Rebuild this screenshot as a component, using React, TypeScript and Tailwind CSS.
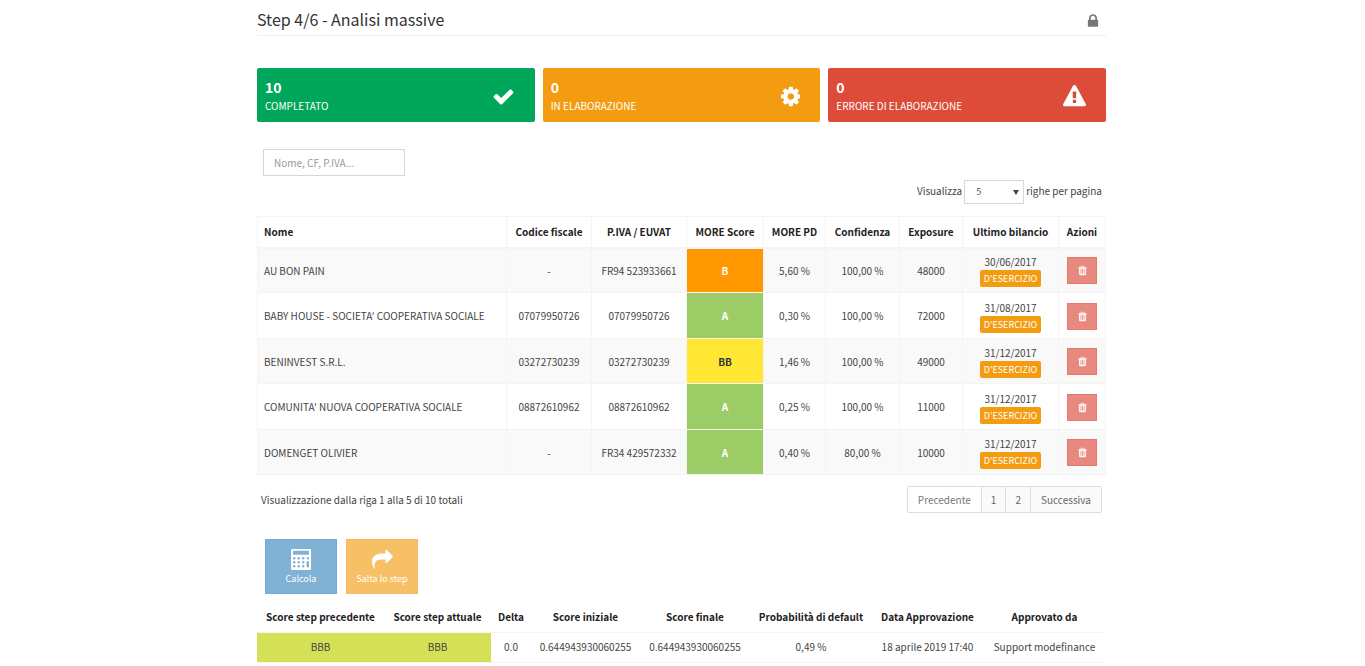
import React, { useState } from "react";

interface IconProps {
  d: string;
  viewBox?: string;
  className?: string;
}

interface Company {
  name: string;
  taxCode: string;
  vat: string;
  score: "A" | "B" | "BB";
  pd: string;
  confidence: string;
  exposure: string;
  lastReport: string;
}

const ICONS = {
  lock: "M640 768h512v-192q0-106-75-181t-181-75-181 75-75 181v192zm832 96v576q0 40-28 68t-68 28h-960q-40 0-68-28t-28-68v-576q0-40 28-68t68-28h32v-192q0-184 132-316t316-132 316 132 132 316v192h32q40 0 68 28t28 68z",
  check: "M1671 566q0 40-28 68l-724 724-136 136q-28 28-68 28t-68-28l-136-136-362-362q-28-28-28-68t28-68l136-136q28-28 68-28t68 28l294 295 656-657q28-28 68-28t68 28l136 136q28 28 28 68z",
  cog: "M1152 896q0-106-75-181t-181-75-181 75-75 181 75 181 181 75 181-75 75-181zm512-109v222q0 12-8 23t-20 13l-185 28q-19 54-39 91 35 50 107 138 10 12 10 25t-9 23q-27 37-99 108t-94 71q-12 0-26-9l-138-108q-44 23-91 38-16 136-29 186-7 28-36 28h-222q-14 0-24.5-8.5t-11.5-21.5l-28-184q-49-16-90-37l-141 107q-10 9-25 9-14 0-25-11-126-114-165-168-7-10-7-23 0-12 8-23 15-21 51-66.5t54-70.5q-27-50-41-99l-183-27q-13-2-21-12.5t-8-23.5v-222q0-12 8-23t19-13l186-28q14-46 39-92-40-57-107-138-10-12-10-24 0-10 9-23 26-36 98.5-107.5t94.5-71.5q13 0 26 10l138 107q44-23 91-38 16-136 29-186 7-28 36-28h222q14 0 24.5 8.5t11.5 21.5l28 184q49 16 90 37l142-107q9-9 24-9 13 0 25 10 129 119 165 170 7 8 7 22 0 12-8 23-15 21-51 66.5t-54 70.5q26 50 41 98l183 28q13 2 21 12.5t8 23.5z",
  warning:
    "M1024 1375v-190q0-14-9.5-23.5t-22.5-9.5h-192q-13 0-22.5 9.5t-9.5 23.5v190q0 14 9.5 23.5t22.5 9.5h192q13 0 22.5-9.5t9.5-23.5zm-2-374l18-459q0-12-10-19-13-11-24-11h-220q-11 0-24 11-10 7-10 21l17 457q0 10 10 16.5t24 6.5h185q14 0 23.5-6.5t10.5-16.5zm-14-934l768 1408q35 63-2 126-17 29-46.5 46t-63.5 17h-1536q-34 0-63.5-17t-46.5-46q-37-63-2-126l768-1408q17-31 47-49t65-18 65 18 47 49z",
  trash:
    "M704 1376v-704q0-14-9-23t-23-9h-64q-14 0-23 9t-9 23v704q0 14 9 23t23 9h64q14 0 23-9t9-23zm256 0v-704q0-14-9-23t-23-9h-64q-14 0-23 9t-9 23v704q0 14 9 23t23 9h64q14 0 23-9t9-23zm256 0v-704q0-14-9-23t-23-9h-64q-14 0-23 9t-9 23v704q0 14 9 23t23 9h64q14 0 23-9t9-23zm-544-992h448l-48-117q-7-9-17-11h-317q-10 2-17 11zm928 32v64q0 14-9 23t-23 9h-96v948q0 83-47 143.5t-113 60.5h-832q-66 0-113-58.5t-47-141.5v-952h-96q-14 0-23-9t-9-23v-64q0-14 9-23t23-9h309l70-167q15-37 54-63t79-26h320q40 0 79 26t54 63l70 167h309q14 0 23 9t9 23z",
  share:
    "M1792 640q0 26-19 45l-512 512q-19 19-45 19t-45-19-19-45v-256h-224q-98 0-175.5 6t-154 21.5-133 42.5-105.5 69.5-80 101-48.5 138.5-17.5 181q0 55 5 123 0 6 2.5 23.5t2.5 26.5q0 15-8.5 25t-23.5 10q-16 0-28-17-7-9-13-22t-13.5-30-10.5-24q-127-285-127-451 0-199 53-333 162-403 875-403h224v-256q0-26 19-45t45-19 45 19l512 512q19 19 19 45z",
};

const COMPANIES: Company[] = [
  { name: "AU BON PAIN", taxCode: "-", vat: "FR94 523933661", score: "B", pd: "5,60 %", confidence: "100,00 %", exposure: "48000", lastReport: "30/06/2017" },
  { name: "BABY HOUSE - SOCIETA' COOPERATIVA SOCIALE", taxCode: "07079950726", vat: "07079950726", score: "A", pd: "0,30 %", confidence: "100,00 %", exposure: "72000", lastReport: "31/08/2017" },
  { name: "BENINVEST S.R.L.", taxCode: "03272730239", vat: "03272730239", score: "BB", pd: "1,46 %", confidence: "100,00 %", exposure: "49000", lastReport: "31/12/2017" },
  { name: "COMUNITA' NUOVA COOPERATIVA SOCIALE", taxCode: "08872610962", vat: "08872610962", score: "A", pd: "0,25 %", confidence: "100,00 %", exposure: "11000", lastReport: "31/12/2017" },
  { name: "DOMENGET OLIVIER", taxCode: "-", vat: "FR34 429572332", score: "A", pd: "0,40 %", confidence: "80,00 %", exposure: "10000", lastReport: "31/12/2017" },
];

const SCORE_COLORS = {
  A: "bg-[#9ccc65] text-white",
  B: "bg-[#ff9800] text-white",
  BB: "bg-[#ffe734] text-[#333]",
};

const STATUSES = [
  { count: 10, label: "COMPLETATO", color: "bg-[#00a65a]", icon: ICONS.check, viewBox: "0 0 1792 1792" },
  { count: 0, label: "IN ELABORAZIONE", color: "bg-[#f39c12]", icon: ICONS.cog, viewBox: "128 0 1536 1792" },
  { count: 0, label: "ERRORE DI ELABORAZIONE", color: "bg-[#dd4b39]", icon: ICONS.warning, viewBox: "0 0 1792 1792" },
];

function Icon({ d, viewBox = "0 0 1792 1792", className = "" }: IconProps) {
  return (
    <svg viewBox={viewBox} fill="currentColor" className={className} aria-hidden="true">
      <path d={d} />
    </svg>
  );
}

function CalculatorIcon({ className = "" }: { className?: string }) {
  return (
    <svg viewBox="0 0 20 21" className={className} aria-hidden="true">
      <path
        fill="currentColor"
        fillRule="evenodd"
        d="M1.2 0h17.6q1.2 0 1.2 1.2v18.6q0 1.2-1.2 1.2H1.2Q0 21 0 19.8V1.2Q0 0 1.2 0zM2 1.8v4h16v-4z"
      />
      <g fill="#7fb2d4">
        {[8, 12, 16].map((y) => (
          <React.Fragment key={y}>
            <rect x="2" y={y} width="2.4" height="2.4" rx="1.2" />
            <rect x="6.5" y={y} width="2.4" height="2.4" rx="1.2" />
            <rect x="11" y={y} width="2.4" height="2.4" rx="1.2" />
          </React.Fragment>
        ))}
        <rect x="15.6" y="8" width="2.4" height="2.4" rx="1.2" />
        <rect x="15.6" y="12" width="2.4" height="6.4" rx="1.2" />
      </g>
    </svg>
  );
}

function StatusCards() {
  return (
    <div className="grid grid-cols-3 gap-2">
      {STATUSES.map((status) => (
        <div
          key={status.label}
          className={`flex items-center justify-between rounded-xs pt-[9px] pr-5 pb-[7px] pl-2 text-white ${status.color}`}
        >
          <div>
            <div className="text-sm leading-5 font-bold">{status.count}</div>
            <div className="leading-[18px]">{status.label}</div>
          </div>
          <Icon d={status.icon} viewBox={status.viewBox} className="h-[23px]" />
        </div>
      ))}
    </div>
  );
}

function CompaniesTable() {
  const head = "border border-[#f4f4f4] border-b-2 text-center font-bold";
  const cell = "border border-[#f4f4f4] pt-px text-center";

  return (
    <table className="w-full table-fixed border-collapse">
      <colgroup>
        <col />
        <col className="w-[85px]" />
        <col className="w-[95px]" />
        <col className="w-[77px]" />
        <col className="w-[62px]" />
        <col className="w-[74px]" />
        <col className="w-[63px]" />
        <col className="w-[96px]" />
        <col className="w-[47px]" />
      </colgroup>
      <thead>
        <tr className="h-[31px] text-[#222]">
          <th className="border border-b-2 border-[#f4f4f4] pl-[6px] text-left font-bold">Nome</th>
          <th className={head}>Codice fiscale</th>
          <th className={head}>P.IVA / EUVAT</th>
          <th className={head}>MORE Score</th>
          <th className={head}>MORE PD</th>
          <th className={head}>Confidenza</th>
          <th className={head}>Exposure</th>
          <th className={head}>Ultimo bilancio</th>
          <th className={head}>Azioni</th>
        </tr>
      </thead>
      <tbody>
        {COMPANIES.map((company) => (
          <tr key={company.name} className="odd:h-[45px] odd:bg-[#f9f9f9] even:h-[46px]">
            <td className="border border-[#f4f4f4] pt-px pl-[6px]">{company.name}</td>
            <td className={cell}>{company.taxCode}</td>
            <td className={cell}>{company.vat}</td>
            <td className={`${cell} font-bold ${SCORE_COLORS[company.score]}`}>{company.score}</td>
            <td className={cell}>{company.pd}</td>
            <td className={cell}>{company.confidence}</td>
            <td className={cell}>{company.exposure}</td>
            <td className={cell}>
              <div className="leading-4">{company.lastReport}</div>
              <span className="inline-block rounded-xs bg-[#f39c12] px-1 align-top text-[9px] leading-[17px] text-white">
                D'ESERCIZIO
              </span>
            </td>
            <td className={cell}>
              <button
                type="button"
                aria-label="Elimina"
                className="inline-flex h-[27px] w-[30px] items-center justify-center border border-[#e37a6d] bg-[#e7897e] align-middle text-white/90"
              >
                <Icon d={ICONS.trash} className="size-[11px]" />
              </button>
            </td>
          </tr>
        ))}
      </tbody>
    </table>
  );
}

function Pagination() {
  const item = "bg-[#fafafa] leading-[25px] text-[#666]";
  return (
    <nav className="flex divide-x divide-[#ddd] overflow-hidden rounded-xs border border-[#ddd]">
      <button type="button" disabled className="bg-white px-[10px] leading-[25px] text-[#777]">
        Precedente
      </button>
      <a href="#1" className={`px-[9px] ${item}`}>
        1
      </a>
      <a href="#2" className={`px-[9px] ${item}`}>
        2
      </a>
      <a href="#2" className={`px-[10px] ${item}`}>
        Successiva
      </a>
    </nav>
  );
}

function ScoreTable() {
  const cell = "border-y border-[#f4f4f4] text-center";
  return (
    <table className="w-full table-fixed border-collapse">
      <colgroup>
        <col className="w-[127px]" />
        <col className="w-[107px]" />
        <col className="w-[40px]" />
        <col className="w-[109px]" />
        <col className="w-[110px]" />
        <col className="w-[122px]" />
        <col className="w-[111px]" />
        <col />
      </colgroup>
      <thead>
        <tr className="h-[30px] text-[#222]">
          <th className="font-bold">Score step precedente</th>
          <th className="font-bold">Score step attuale</th>
          <th className="font-bold">Delta</th>
          <th className="font-bold">Score iniziale</th>
          <th className="font-bold">Score finale</th>
          <th className="font-bold">Probabilità di default</th>
          <th className="font-bold">Data Approvazione</th>
          <th className="font-bold">Approvato da</th>
        </tr>
      </thead>
      <tbody>
        <tr className="h-[30px]">
          <td className={`${cell} bg-[#d4e157]`}>BBB</td>
          <td className={`${cell} bg-[#d4e157]`}>BBB</td>
          <td className={cell}>0.0</td>
          <td className={cell}>0.644943930060255</td>
          <td className={cell}>0.644943930060255</td>
          <td className={cell}>0,49 %</td>
          <td className={cell}>18 aprile 2019 17:40</td>
          <td className={cell}>Support modefinance</td>
        </tr>
      </tbody>
    </table>
  );
}

export default function App() {
  const [query, setQuery] = useState("");
  const [pageSize, setPageSize] = useState("5");

  return (
    <div className="bg-white pr-0.5 font-['Noto_Sans_CJK_SC','Noto_Sans',sans-serif] text-[10px] leading-4 text-[#444]">
      <main className="mx-auto w-full max-w-[849px]">
        <header className="flex h-9 items-center justify-between border-b border-[#eee] pt-[3px] pr-[5px]">
          <h1 className="text-base leading-6 text-[#333]">Step 4/6 - Analisi massive</h1>
          <Icon d={ICONS.lock} className="mt-1 size-4 text-[#777]" />
        </header>

        <div className="mt-8">
          <StatusCards />
        </div>

        <div className="mt-[27px] pl-[6px]">
          <input
            type="text"
            aria-label="Cerca"
            placeholder="Nome, CF, P.IVA..."
            value={query}
            onChange={(e) => setQuery(e.target.value)}
            className="block h-[27px] w-[142px] border border-[#d2d6de] px-[10px] outline-none placeholder:text-[#999]"
          />
        </div>

        <div className="mt-1 flex justify-end gap-0.5 pr-1 leading-[22px]">
          <label htmlFor="page-size">Visualizza</label>
          <div className="relative">
            <select
              id="page-size"
              value={pageSize}
              onChange={(e) => setPageSize(e.target.value)}
              className="block h-6 w-[60px] appearance-none border border-[#d2d6de] bg-white pl-[11px] text-[9px] text-[#555]"
            >
              <option>5</option>
              <option>10</option>
              <option>25</option>
            </select>
            <Icon
              d="M0 0h6l-3 5z"
              viewBox="0 0 6 5"
              className="pointer-events-none absolute top-[10px] right-[5px] h-[5px] w-[6px] text-[#444]"
            />
          </div>
          <span>righe per pagina</span>
        </div>

        <div className="mt-3">
          <CompaniesTable />
        </div>

        <div className="mt-[11px] flex items-center justify-between pr-1 pl-1">
          <p>Visualizzazione dalla riga 1 alla 5 di 10 totali</p>
          <Pagination />
        </div>

        <div className="mt-[26px] flex gap-[9px] pl-2 text-[9px] leading-[14px] text-white">
          <button
            type="button"
            className="flex h-[55px] w-[72px] flex-col items-center justify-center gap-0.5 border border-[#76abcf] bg-[#7fb2d4] pt-0.5"
          >
            <CalculatorIcon className="h-[21px] w-5" />
            <span>Calcola</span>
          </button>
          <button
            type="button"
            className="flex h-[55px] w-[72px] flex-col items-center justify-center gap-0.5 border border-[#f5b95e] bg-[#f7bf66] pt-0.5"
          >
            <Icon d={ICONS.share} className="h-[21px]" />
            <span>Salta lo step</span>
          </button>
        </div>

        <div className="mt-2">
          <ScoreTable />
        </div>
      </main>
    </div>
  );
}
